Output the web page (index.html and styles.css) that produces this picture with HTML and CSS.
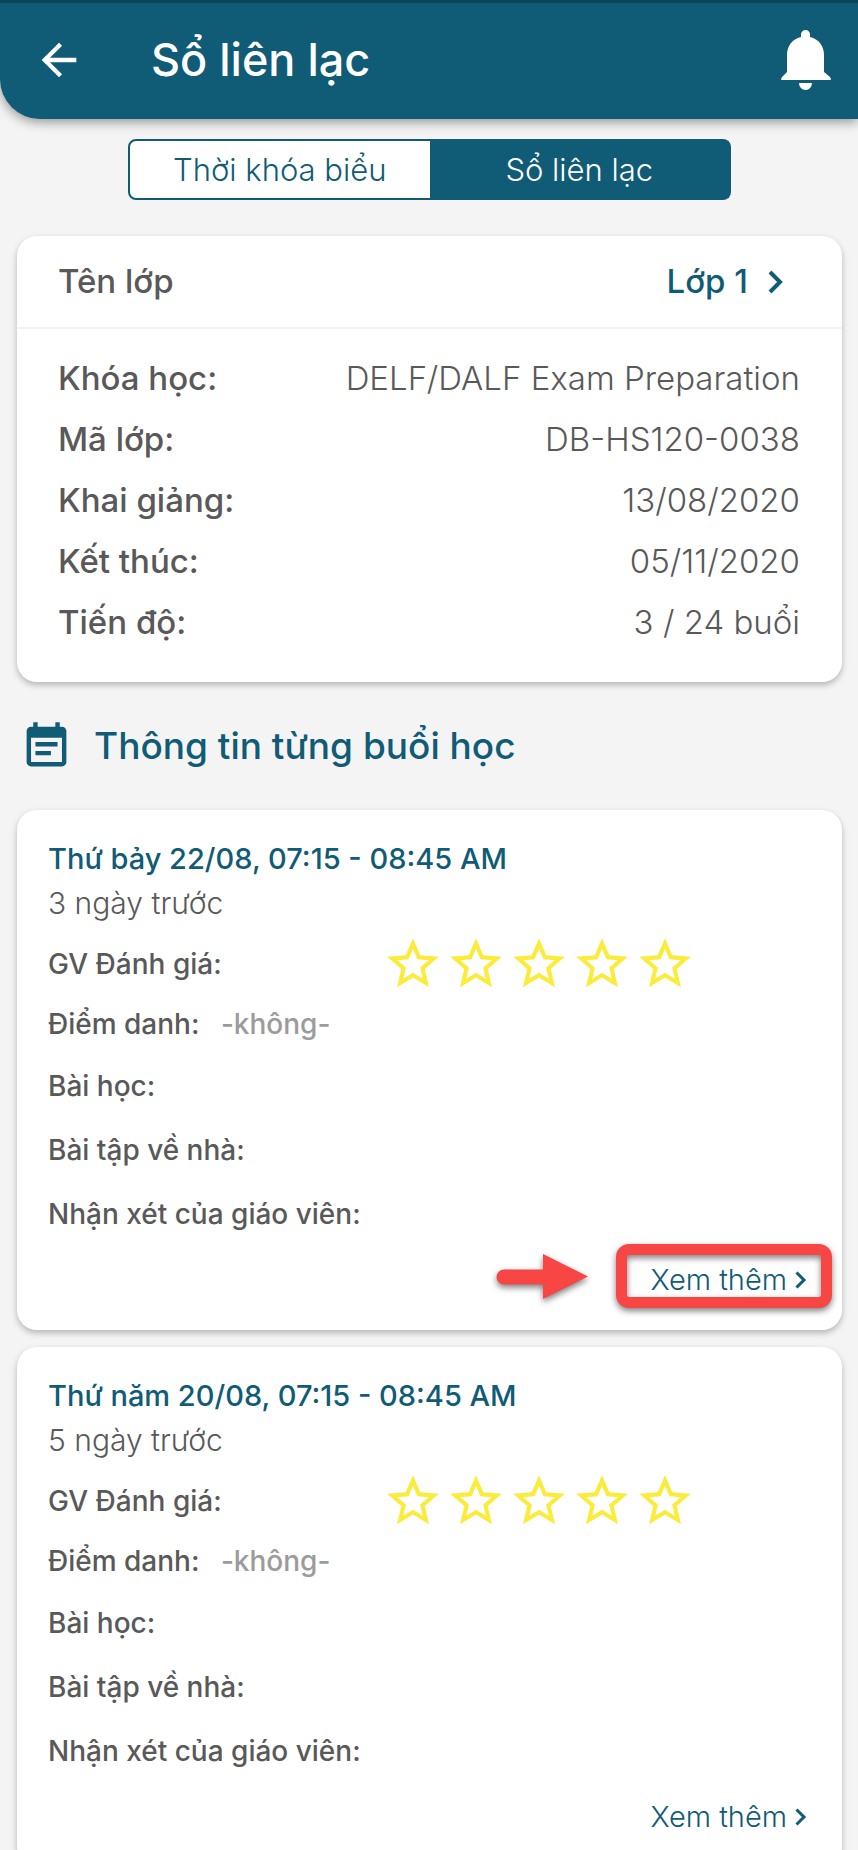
FILE: index.html
```html
<!DOCTYPE html>
<html lang="vi">
<head>
<meta charset="utf-8">
<meta name="viewport" content="width=device-width, initial-scale=1">
<title>Sổ liên lạc</title>
<link rel="stylesheet" href="styles.css">
</head>
<body>
<svg class="sprite" aria-hidden="true">
  <symbol id="star" viewBox="0 0 24 24"><path d="M22 9.24l-7.19-.62L12 2 9.19 8.63 2 9.24l5.46 4.73L5.82 21 12 17.27 18.18 21l-1.63-7.03L22 9.24zM12 15.4l-3.76 2.27 1-4.28-3.32-2.88 4.38-.38L12 6.1l1.71 4.04 4.38.38-3.32 2.88 1 4.28L12 15.4z"/></symbol>
  <symbol id="chevron" viewBox="0 0 16 24"><path d="M2 2l10 10L2 22" fill="none" stroke="currentColor" stroke-width="4"/></symbol>
</svg>
<div class="app">
  <header class="topbar">
    <button class="icon-btn" type="button" aria-label="Quay lại">
      <svg class="back" viewBox="0 0 24 24"><path d="M20 11H7.83l5.59-5.59L12 4l-8 8 8 8 1.41-1.41L7.83 13H20v-2z"/></svg>
    </button>
    <h1 class="topbar-title">Sổ liên lạc</h1>
    <button class="icon-btn" type="button" aria-label="Thông báo">
      <svg class="bell" viewBox="0 0 50 60"><path d="M20 7V4.500a4.500 4.500 0 0 1 9 0V7C38 9 43 16 43 25v17l6 5q1 1 .8 3H.2Q0 48 1 47l5-5V25C6 16 11 9 20 7zM18 53h13a6.500 7 0 0 1-13 0z"/></svg>
    </button>
  </header>
  <main class="content">
    <nav class="tabs">
      <button class="tab" type="button">Thời khóa biểu</button>
      <button class="tab tab-active" type="button">Sổ liên lạc</button>
    </nav>

    <section class="card">
      <div class="class-row">
        <span>Tên lớp</span>
        <button class="class-pick" type="button">Lớp 1 <svg class="chevron-lg"><use href="#chevron"/></svg></button>
      </div>
      <dl class="info">
        <div class="info-row"><dt>Khóa học:</dt><dd>DELF/DALF Exam Preparation</dd></div>
        <div class="info-row"><dt>Mã lớp:</dt><dd>DB-HS120-0038</dd></div>
        <div class="info-row"><dt>Khai giảng:</dt><dd>13/08/2020</dd></div>
        <div class="info-row"><dt>Kết thúc:</dt><dd>05/11/2020</dd></div>
        <div class="info-row"><dt>Tiến độ:</dt><dd>3 / 24 buổi</dd></div>
      </dl>
    </section>

    <div class="section-head">
      <svg class="note" viewBox="0 0 24 24" aria-hidden="true"><path d="M17 10H7v2h10v-2zm2-7h-1V1h-2v2H8V1H6v2H5c-1.110 0-1.990.9-1.990 2L3 19a2 2 0 0 0 2 2h14c1.100 0 2-.9 2-2V5c0-1.100-.9-2-2-2zm0 16H5V8h14v11zm-5-5H7v2h7v-2z"/></svg>
      <h2 class="section-title">Thông tin từng buổi học</h2>
    </div>

    <article class="card session">
      <h3 class="session-date">Thứ bảy 22/08, 07:15 - 08:45 AM</h3>
      <p class="session-ago">3 ngày trước</p>
      <div class="rating">
        <span class="rating-label">GV Đánh giá:</span>
        <span class="stars" role="img" aria-label="0 trên 5 sao"><svg><use href="#star"/></svg><svg><use href="#star"/></svg><svg><use href="#star"/></svg><svg><use href="#star"/></svg><svg><use href="#star"/></svg></span>
      </div>
      <p class="attendance">Điểm danh: <span class="muted">-không-</span></p>
      <p class="field">Bài học:</p>
      <p class="field">Bài tập về nhà:</p>
      <p class="field">Nhận xét của giáo viên:</p>
      <div class="session-foot">
        <a class="more" href="#">Xem thêm<svg class="chevron-sm"><use href="#chevron"/></svg><span class="callout"></span><svg class="pointer" viewBox="0 0 92 46" aria-hidden="true"><path d="M8 15.500H47V0L92 22.500 47 45V30.500H8a7.500 7.500 0 0 1 0-15z"/></svg></a>
      </div>
    </article>

    <article class="card session">
      <h3 class="session-date">Thứ năm 20/08, 07:15 - 08:45 AM</h3>
      <p class="session-ago">5 ngày trước</p>
      <div class="rating">
        <span class="rating-label">GV Đánh giá:</span>
        <span class="stars" role="img" aria-label="0 trên 5 sao"><svg><use href="#star"/></svg><svg><use href="#star"/></svg><svg><use href="#star"/></svg><svg><use href="#star"/></svg><svg><use href="#star"/></svg></span>
      </div>
      <p class="attendance">Điểm danh: <span class="muted">-không-</span></p>
      <p class="field">Bài học:</p>
      <p class="field">Bài tập về nhà:</p>
      <p class="field">Nhận xét của giáo viên:</p>
      <div class="session-foot">
        <a class="more" href="#">Xem thêm<svg class="chevron-sm"><use href="#chevron"/></svg></a>
      </div>
    </article>
  </main>
</div>
</body>
</html>
```
FILE: styles.css
```css
:root {
  --teal: #105b75;
  --ink: #595959;
  --red: #f74643;
}

* { box-sizing: border-box; }

body {
  margin: 0;
  background: #f4f4f4;
  color: var(--ink);
  font-family: Inter, "Liberation Sans", sans-serif;
  font-size: 28px;
}

h1, h2, h3, p, dl, dd { margin: 0; font-weight: 500; }

button {
  margin: 0;
  padding: 0;
  border: 0;
  background: none;
  color: inherit;
  font: inherit;
}

svg { display: block; fill: currentColor; flex: none; }

.sprite { position: absolute; width: 0; height: 0; }

.app {
  display: flex;
  flex-direction: column;
  height: 100vh;
  overflow: hidden;
}

.topbar {
  display: flex;
  align-items: center;
  flex: none;
  z-index: 1;
  padding: 27px 27px 29px 33px;
  border-top: 3px solid #0a4558;
  border-bottom-left-radius: 40px;
  background: var(--teal);
  box-shadow: 0 3px 12px rgba(0, 0, 0, 0.4);
  color: #fff;
}

.topbar-title {
  flex: 1;
  margin-left: 66px;
  font-size: 45px;
  line-height: 60px;
}

.back { width: 52px; height: 52px; }
.bell { width: 50px; height: 60px; }

.content {
  flex: 1;
  padding: 20px 16px 16px 17px;
  overflow-y: auto;
  scrollbar-width: none;
}

.tabs {
  display: flex;
  margin: 0 111px 36px;
  border: 2px solid var(--teal);
  border-radius: 8px;
  background: #fff;
}

.tab {
  flex: 1;
  color: var(--teal);
  font-size: 31px;
  font-weight: 300;
  line-height: 57px;
}

.tab-active { background: var(--teal); color: #fff; }

.card {
  border-radius: 20px;
  background: #fff;
  box-shadow: 0 3px 6px rgba(0, 0, 0, 0.26);
}

.class-row {
  display: flex;
  justify-content: space-between;
  align-items: center;
  padding: 0 58px 0 41px;
  border-bottom: 2px solid #f2f2f2;
  font-size: 33px;
  font-weight: 500;
  line-height: 91px;
}

.class-pick {
  display: flex;
  align-items: center;
  gap: 20px;
  color: var(--teal);
}

.chevron-lg { width: 16px; height: 24px; }

.info {
  padding: 19px 42px 29px 41px;
  font-size: 33px;
  line-height: 61px;
}

.info-row { display: flex; justify-content: space-between; }
.info-row dt { font-weight: 500; }
.info-row dd { font-weight: 300; }

.section-head {
  display: flex;
  align-items: center;
  gap: 21px;
  height: 128px;
  padding-left: 3px;
  color: var(--teal);
}

.note { width: 53px; height: 53px; }

.section-title { font-size: 37px; line-height: 60px; }

.session { padding: 26px 31px 17px; }
.session + .session { margin-top: 17px; }

.session-date { color: var(--teal); font-size: 29px; line-height: 45px; }

.session-ago { font-size: 30px; font-weight: 300; line-height: 45px; }

.rating {
  display: flex;
  align-items: center;
  gap: 6px;
  margin-top: 7px;
  font-weight: 500;
}

.rating-label { flex: 0 0 43%; }

.stars { display: flex; gap: 1px; color: #fbec3b; }
.stars svg { width: 62px; height: 62px; }

.attendance { line-height: 59px; }
.muted { margin-left: 14px; color: #9b9b9b; }
.field { line-height: 64px; }

.session-foot { display: flex; justify-content: flex-end; }

.more {
  display: flex;
  position: relative;
  align-items: center;
  gap: 8px;
  padding-right: 4px;
  color: var(--teal);
  font-size: 29px;
  font-weight: 300;
  line-height: 67px;
  text-decoration: none;
}

.chevron-sm { width: 12px; height: 18px; }

.callout {
  position: absolute;
  inset: -2px -21px 5px -35px;
  border: 11px solid var(--red);
  border-radius: 13px;
  filter: drop-shadow(0 3px 3px rgba(0, 0, 0, 0.5));
}

.pointer {
  position: absolute;
  top: 8px;
  right: calc(100% + 63px);
  width: 92px;
  height: 46px;
  color: var(--red);
  filter: drop-shadow(0 3px 3px rgba(0, 0, 0, 0.5));
}
```
